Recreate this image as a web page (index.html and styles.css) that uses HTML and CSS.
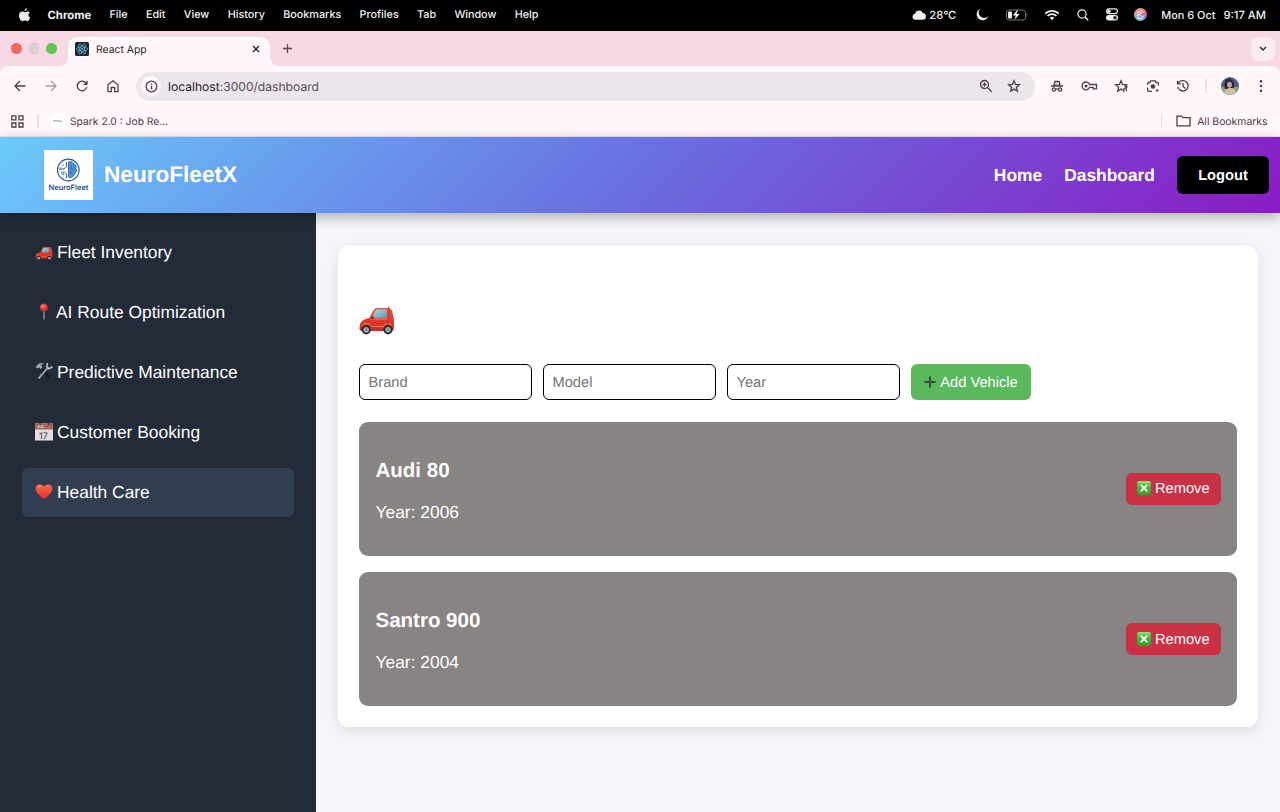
FILE: index.html
```html
<!DOCTYPE html>
<html lang="en">
<head>
<meta charset="utf-8">
<title>React App</title>
<link rel="stylesheet" href="styles.css">
</head>
<body>
<svg class="defs" width="0" height="0">
  <defs>
    <linearGradient id="carRed" x1="0" y1="0" x2="0" y2="1"><stop offset="0" stop-color="#e8503c"/><stop offset=".5" stop-color="#e23a28"/><stop offset="1" stop-color="#c82a1e"/></linearGradient>
    <linearGradient id="glass" x1="0" y1="0" x2="1" y2="1"><stop offset="0" stop-color="#a9dbe6"/><stop offset="1" stop-color="#5ba0b2"/></linearGradient>
    <radialGradient id="pinRed" cx=".4" cy=".35" r=".7"><stop offset="0" stop-color="#f38b7c"/><stop offset=".5" stop-color="#d8392f"/><stop offset="1" stop-color="#a51d1a"/></radialGradient>
    <linearGradient id="heartRed" x1="0" y1="0" x2="0" y2="1"><stop offset="0" stop-color="#fb6b50"/><stop offset="1" stop-color="#df2c1c"/></linearGradient>
    <linearGradient id="crossGreen" x1="0" y1="0" x2="0" y2="1"><stop offset="0" stop-color="#7bdc63"/><stop offset=".4" stop-color="#4fb93d"/><stop offset="1" stop-color="#379a29"/></linearGradient>
    <symbol id="car" viewBox="0 0 36 29">
      <path d="M29 3l1-2.500" stroke="#a5281e" stroke-width="1"/>
      <path d="M.8 20c.3-4 3-6.500 9.500-8.200L14.500 4.500C15.500 2.500 16.500 2 19 2h9.500c2.500 0 3.700.5 4.400 3l2 8v9.500c0 1.600-.8 2.500-2.500 2.500H3C1 25 .5 24 .5 22z" fill="url(#carRed)"/>
      <path d="M12.700 11.700l3.600-6.900c.6-1.200 1.400-1.600 2.600-1.600H27.500l.4 8.500z" fill="url(#glass)"/>
      <path d="M29.300 3.700h1.200l1.500 7-2.300.5z" fill="#c8433a"/>
      <path d="M11.500 13h16.500M3 19.500c4-3 8-2.500 10 1h11c2-3.500 6-4 9-1" fill="none" stroke="#f49b88" stroke-width=".8"/>
      <path d="M28.500 12v8" stroke="#a3261d" stroke-width=".6"/>
      <rect x="12" y="10.500" width="3" height="2.800" rx="1" fill="#a3261d"/>
      <circle cx="7.200" cy="23.800" r="4.600" fill="#282828"/><circle cx="7.200" cy="23.800" r="2.800" fill="#9ca6b1"/><circle cx="7.200" cy="23.800" r=".8" fill="#4d555e"/>
      <circle cx="29" cy="23.800" r="4.600" fill="#282828"/><circle cx="29" cy="23.800" r="2.800" fill="#9ca6b1"/><circle cx="29" cy="23.800" r=".8" fill="#4d555e"/>
    </symbol>
    <symbol id="cross" viewBox="0 0 14 14">
      <rect width="14" height="14" rx="2" fill="url(#crossGreen)"/><path d="M1.500 1h11" stroke="#b4efa5" stroke-width=".8"/><path d="M3.700 3.700l6.600 6.600M10.300 3.700l-6.600 6.600" stroke="#fff" stroke-width="1.700"/>
    </symbol>
  </defs>
</svg>

<div class="menubar">
  <svg class="apple" width="13" height="14" viewBox="0 0 13 14"><path d="M8.900.2c.1 1.500-1 2.800-2.400 2.900C6.300 1.700 7.500.4 8.900.2zM11.800 4.700c-2 1.200-1.700 3.900.4 4.800-.7 2-1.700 3.700-2.900 3.700-.9 0-1.200-.6-2.300-.6s-1.500.6-2.300.6C2.900 13.200 1 10.100 1 7.400c0-2.500 1.600-3.900 3.300-3.900 1 0 1.800.7 2.500.7.700 0 1.600-.8 2.900-.8.800 0 1.600.5 2.100 1.300z" fill="#eee"/></svg>
  <nav class="menus"><b>Chrome</b><span>File</span><span>Edit</span><span>View</span><span>History</span><span>Bookmarks</span><span>Profiles</span><span>Tab</span><span>Window</span><span>Help</span></nav>
  <div class="status">
    <svg class="cloud" width="14" height="12" viewBox="0 0 14 12"><path d="M3.200 10.800A3.100 3.100 0 0 1 2.900 4.700 4.300 4.300 0 0 1 10.900 3.900a3.500 3.500 0 0 1 .2 6.900z" fill="#eee"/></svg>
    <span class="temp">28°C</span>
    <svg class="moon" width="13" height="13" viewBox="0 0 13 13"><path d="M4.200.8A6 6 0 1 0 12.300 8.300 4.800 4.800 0 0 1 4.200.8z" fill="#eee"/></svg>
    <svg class="battery" width="22" height="12" viewBox="0 0 22 12"><rect x=".5" y="1" width="19" height="10" rx="2.500" fill="none" stroke="#777"/><rect x="2" y="2.500" width="4" height="7" rx="1" fill="#eee"/><path d="M11 1.300L6.800 6.600h3L8.500 10.800l5-5.700h-3.100l1.500-3.800z" fill="#fff"/><path d="M20.500 4.200c1.200.6 1.200 3 0 3.600z" fill="#777"/></svg>
    <svg class="wifi" width="16" height="12" viewBox="0 0 16 12" fill="none" stroke="#f2f2f2"><path d="M1.200 4.600a9.800 9.800 0 0 1 13.600 0M3.500 7a6.500 6.500 0 0 1 9 0" stroke-width="1.700"/><path d="M5.700 8.800a3.300 3.300 0 0 1 4.600 0L8 11.300z" fill="#f2f2f2" stroke="none"/></svg>
    <svg class="search" width="12" height="12" viewBox="0 0 12 12" fill="none" stroke="#eee"><circle cx="5" cy="5" r="4.100" stroke-width="1.200"/><path d="M8 8l3.200 3.200" stroke-width="1.500"/></svg>
    <svg class="control" width="12" height="13" viewBox="0 0 12 13"><rect x=".6" y=".9" width="10.800" height="4.700" rx="2.350" fill="none" stroke="#eee" stroke-width="1.100"/><circle cx="3" cy="3.250" r="1.700" fill="#eee"/><rect y="7" width="12" height="5.500" rx="2.750" fill="#eee"/><circle cx="9" cy="9.750" r="1.700" fill="#222"/></svg>
    <span class="siri"><svg width="13" height="13" viewBox="0 0 13 13" fill="none" stroke="#fff"><path d="M3 5l2-1.500 1.500 1.500L8.500 3.500 10 5M3 8c1.500-2 3-2 4-.5S9.300 9 10 7.500M4 10c2 1 4 .5 5.300-.5"/></svg></span>
    <span class="date">Mon 6 Oct</span><span class="clock">9:17 AM</span>
  </div>
</div>

<div class="tabstrip">
  <div class="lights"><i class="red"></i><i class="grey"></i><i class="green"></i></div>
  <div class="tab">
    <svg width="14" height="14" viewBox="0 0 14 14"><rect width="14" height="14" rx="1.500" fill="#20262f"/><g fill="none" stroke="#5eb8d4" stroke-width=".75"><ellipse cx="7" cy="7" rx="5.600" ry="2.200"/><ellipse cx="7" cy="7" rx="5.600" ry="2.200" transform="rotate(60 7 7)"/><ellipse cx="7" cy="7" rx="5.600" ry="2.200" transform="rotate(120 7 7)"/></g><circle cx="7" cy="7" r="1" fill="#5eb8d4"/></svg>
    <span>React App</span>
    <svg class="close" width="8" height="8" viewBox="0 0 8 8"><path d="M1 1l6 6M7 1l-6 6" stroke="#2b2326" stroke-width="1.300"/></svg>
  </div>
  <svg class="plus" width="11" height="11" viewBox="0 0 11 11"><path d="M5.500 1v9M1 5.500h9" stroke="#5a444c" stroke-width="1.300"/></svg>
  <div class="tabsearch"><svg width="8" height="6" viewBox="0 0 8 6"><path d="M1 1l3 3 3-3" fill="none" stroke="#2b2326" stroke-width="1.400"/></svg></div>
</div>

<div class="toolbar">
  <div class="navicons">
    <svg width="14" height="14" viewBox="0 0 14 14"><path d="M12.500 7H2M7 2L2 7l5 5" class="ln"/></svg>
    <svg class="dim" width="14" height="14" viewBox="0 0 14 14"><path d="M1.500 7H12M7 2l5 5-5 5" class="ln"/></svg>
    <svg width="14" height="14" viewBox="0 0 14 14"><path d="M11.700 8.200A4.800 4.800 0 1 1 10.800 4l1 1.200M12 1.700v3.600H8.400" class="ln"/></svg>
    <svg width="14" height="14" viewBox="0 0 14 14"><path d="M2 5.700L7 1.800l5 3.900v7H8.700V8.500H5.300v4.200H2z" class="ln"/></svg>
  </div>
  <div class="omnibox">
    <span class="info"><svg width="13" height="13" viewBox="0 0 13 13"><circle cx="6.500" cy="6.500" r="5.300" class="ln"/><path d="M6.500 5.700v3.600M6.500 3.400v1.300" class="ln"/></svg></span>
    <span class="url"><em>localhost</em>:3000/dashboard</span>
    <svg class="zoomicon" width="14" height="14" viewBox="0 0 14 14"><circle cx="5.500" cy="5.500" r="4" class="ln"/><path d="M8.500 8.500l4.400 4.400M5.500 3.600v3.800M3.600 5.500h3.800" class="ln"/></svg>
    <svg width="14" height="14" viewBox="0 0 14 14"><path d="M7 1.800l1.500 3.600 3.900.3-3 2.600.9 3.800L7 10.100l-3.300 2 .9-3.800-3-2.600 3.900-.3z" class="ln"/></svg>
  </div>
  <div class="exticons">
    <svg width="14" height="14" viewBox="0 0 14 14"><path d="M1 7h12M3.900 6.500l1-4h4.200l1 4M5.400 10.300q1.600-.8 3.200 0" class="ln"/><path d="M4 4.500h6v2.500H4z" fill="#4b4044" opacity=".45"/><circle cx="3.900" cy="10.500" r="1.600" class="ln"/><circle cx="10.100" cy="10.500" r="1.600" class="ln"/></svg>
    <svg width="17" height="14" viewBox="0 0 17 14"><path d="M8.600 5.500h6.900v4.300h-3.300V8.300H8.600A3.900 3.900 0 1 1 8.600 5.500z" class="ln"/><circle cx="5" cy="6.900" r="1.500" fill="#4b4044"/></svg>
    <svg width="15" height="14" viewBox="0 0 15 14"><path d="M9 11.300L7 10.100l-3.300 2 .9-3.800-3-2.600 3.900-.3L7 1.800l1.500 3.600 3.900.3-2 1.700M9.800 12.800V9.800L13.700 7.500M12.300 12.300V6.500" class="ln"/></svg>
    <svg width="14" height="14" viewBox="0 0 14 14"><path d="M1.600 5.800V4.500q0-1 1-1h1.300l.9-1.600h4.400l.9 1.600h1.300q1 0 1 1v2M1.600 8.500v2.800q0 1 1 1H6" class="ln"/><circle cx="7" cy="7.500" r="2.300" fill="#4b4044"/><circle cx="11.200" cy="11.500" r="1.200" fill="#4b4044"/></svg>
    <svg width="14" height="14" viewBox="0 0 14 14"><path d="M2.300 4.300a5.200 5.200 0 1 1-.5 3.500M1.600 1.700v3.200h3.200M7 4v3.300l2.300 2.200" class="ln"/></svg>
  </div>
  <i class="divider"></i>
  <svg class="avatar" width="18" height="18" viewBox="0 0 18 18"><defs><clipPath id="face"><circle cx="9" cy="9" r="9"/></clipPath></defs><g clip-path="url(#face)"><rect width="18" height="18" fill="#50628c"/><path d="M0 10h18v8H0z" fill="#a49580"/><path d="M4 12C2 5 5 1.500 8 1.500s6 3 5 9l-3 2z" fill="#292735"/><path d="M3 18c0-5 2-6 5-7h3c3 1 4 3 4 7z" fill="#cdbfa8"/><ellipse cx="8.500" cy="7.800" rx="2.400" ry="3" fill="#cf9f89"/></g></svg>
  <svg class="dots" width="4" height="14" viewBox="0 0 4 14" fill="#4b4044"><circle cx="2" cy="2.200" r="1.250"/><circle cx="2" cy="7" r="1.250"/><circle cx="2" cy="11.800" r="1.250"/></svg>
</div>

<div class="bookmarks">
  <svg width="13" height="13" viewBox="0 0 13 13"><path d="M.9.900h4v4h-4zM8 .9h4v4H8zM.9 8h4v4h-4zM8 8h4v4H8z" class="ln"/></svg>
  <i class="divider"></i>
  <svg class="favicon" width="14" height="14" viewBox="0 0 14 14"><rect width="14" height="14" rx="1" fill="#fff"/><path d="M2 7l3-.3 6 .6" stroke="#888" stroke-width=".9" fill="none"/></svg>
  <span class="spark">Spark 2.0 : Job Re...</span>
  <i class="divider last"></i>
  <svg class="folder" width="15" height="12" viewBox="0 0 15 12"><path d="M1 1.100h4.600l1.500 1.600H14v8.200H1z" class="ln"/></svg>
  <span class="all">All Bookmarks</span>
</div>

<header class="header">
  <svg class="logo" width="49" height="50" viewBox="0 0 49 50"><rect width="49" height="50" fill="#fff"/><circle cx="24.300" cy="20" r="10.900" fill="none" stroke="#2c5c9c" stroke-width="1.100"/><path d="M24.500 12c3-1 5 .2 5.500 2 2 .8 2.600 2.700 2 4.200 1 2 .5 4-1 5-.5 3-3.500 5-6.500 4z" fill="#4c94e2" stroke="#285a9e" stroke-width=".8"/><path d="M27 15v4h3M27 24v-3M22.500 12v5l-3 2M22.500 28v-4l-3-2M16 19h4M20 14.500l-2 2M18 23.500l2 2" fill="none" stroke="#2c5c9c" stroke-width=".9"/><circle cx="16" cy="18.800" r="1.100" fill="#fff" stroke="#2c5c9c" stroke-width=".7"/><circle cx="18.500" cy="23" r="1.100" fill="#fff" stroke="#2c5c9c" stroke-width=".7"/><text x="4.500" y="39.500" textLength="40" lengthAdjust="spacingAndGlyphs" class="logotext">NeuroFleet</text></svg>
  <span class="brand">NeuroFleetX</span>
  <nav><a>Home</a><a>Dashboard</a><button class="logout">Logout</button></nav>
</header>

<div class="app">
  <aside class="sidebar">
    <div class="item"><svg class="minicar" width="18" height="15"><use href="#car"/></svg>Fleet Inventory</div>
    <div class="item pin"><svg width="18" height="18" viewBox="0 0 18 18"><path d="M9 6v10.500" stroke="#a6a6a6" stroke-width="1.200"/><circle cx="9" cy="4.600" r="4.200" fill="url(#pinRed)"/></svg>AI Route Optimization</div>
    <div class="item tools"><svg width="18" height="18" viewBox="0 0 18 18"><path d="M6 6l8.500 10" stroke="#15181b" stroke-width="2"/><path d="M3.500 16.500L13 5.500" stroke="#9baab5" stroke-width="1.900"/><path d="M12.500 1l-.8 3.700 2.300 2 3.500-2" fill="none" stroke="#b4c0c9" stroke-width="1.600"/><path d="M.5 5L4 1.500 9 1 6 3.500l1.500 2-1.700 1.500L4 5.300 2.500 6.500z" fill="#9eabb5"/></svg>Predictive Maintenance</div>
    <div class="item"><svg width="18" height="18" viewBox="0 0 18 18"><rect y=".5" width="18" height="17" fill="#dedede"/><rect y=".5" width="18" height="6" fill="#a56563"/><path d="M4 .5h2v1H4zM13 .5h2v1h-2z" fill="#222"/><text x="2" y="4.800" class="jul">JUL</text><text x="4" y="15.500" class="daynum">17</text></svg>Customer Booking</div>
    <div class="item active"><svg width="18" height="18" viewBox="0 0 18 18"><path d="M9 16.300C6 14 1 10.300.6 5.800.5 1 6.500 0 9 3.500 11.500 0 17.500 1 17.400 5.800 17 10.300 12 14 9 16.300z" fill="url(#heartRed)"/><path d="M3 4.700c.5-1.500 2-2 3.300-1.500" fill="none" stroke="#ff9c82"/></svg>Health Care</div>
  </aside>
  <main class="main">
    <section class="card">
      <svg class="hero" width="36" height="29"><use href="#car"/></svg>
      <div class="form">
        <input placeholder="Brand"><input placeholder="Model"><input placeholder="Year">
        <button class="add"><svg width="12" height="12" viewBox="0 0 12 12"><path d="M6 .5v11M.5 6h11" stroke="#3f4540" stroke-width="2"/></svg>Add Vehicle</button>
      </div>
      <div class="vehicle"><div><h3>Audi 80</h3><p>Year: 2006</p></div><button class="remove"><svg width="14" height="14"><use href="#cross"/></svg>Remove</button></div>
      <div class="vehicle"><div><h3>Santro 900</h3><p>Year: 2004</p></div><button class="remove"><svg width="14" height="14"><use href="#cross"/></svg>Remove</button></div>
    </section>
  </main>
</div>
</body>
</html>
```
FILE: styles.css
```css
* { box-sizing: border-box; }
body { margin: 0; width: 1280px; height: 812px; overflow: hidden; display: flex; flex-direction: column; font-family: "Liberation Sans", Arial, sans-serif; background: #f6d9e5; text-rendering: geometricPrecision; }
.defs { position: absolute; }
svg { display: block; flex: none; }
button, input { font-family: inherit; text-rendering: inherit; }
.ln { fill: none; stroke: #4b4044; stroke-width: 1.3; }

.menubar, .tabstrip, .toolbar, .bookmarks { display: flex; align-items: center; flex: none; font-family: Inter, sans-serif; white-space: nowrap; }
.menubar { height: 31px; background: #000; color: #f2f2f2; padding: 0 14px 2px 18px; font-size: 11.4px; font-weight: 500; }
.apple { margin-right: 16.500px; }
.menus { display: flex; gap: 18.300px; font-size: 10.800px; align-items: center; line-height: 14px; }
.menus b { font-weight: 700; font-size: 11.300px; }
.status { margin-left: auto; display: flex; align-items: center; line-height: 14px; }
.cloud { margin-right: 3px; }
.temp { margin-right: 20px; font-size: 11.200px; }
.moon { margin-right: 17px; }
.battery { margin-right: 16px; }
.wifi { margin-right: 17px; }
.search { margin-right: 17px; }
.control { margin-right: 16px; }
.siri { width: 13px; height: 13px; border-radius: 50%; background: conic-gradient(#eda35e, #e66593, #718de3, #8bcce7, #e68daf, #eda35e); margin-right: 14px; }
.date { margin-right: 8px; font-size: 10.900px; }
.clock { font-size: 11.200px; }

.tabstrip { height: 35px; background: #f6d9e5; padding: 0 5px 0 11px; }
.lights { display: flex; gap: 7px; width: 57px; }
.lights i { width: 10.500px; height: 10.500px; border-radius: 50%; }
.red { background: #ed6a5e; } .grey { background: #ddd0d7; box-shadow: inset 0 0 0 .5px #cbbdc6; } .green { background: #61c554; }
.tab { position: relative; align-self: flex-end; width: 202px; height: 29px; background: #fff7f8; border-radius: 9px 9px 0 0; display: flex; align-items: center; padding: 0 10px 5px 7px; font-size: 10.400px; color: #2b2326; }
.tab::before, .tab::after { content: ""; position: absolute; bottom: 0; width: 8px; height: 8px; }
.tab::before { left: -8px; background: radial-gradient(circle at 0 0, transparent 7.500px, #fff7f8 8px); }
.tab::after { right: -8px; background: radial-gradient(circle at 100% 0, transparent 7.500px, #fff7f8 8px); }
.tab span { margin-left: 7px; }
.close { margin-left: auto; }
.plus { margin-left: 12px; }
.tabsearch { margin-left: auto; width: 24px; height: 24px; border-radius: 8px; background: #fcebf2; display: grid; place-items: center; }

.toolbar { height: 40px; padding: 0 17px 0 12.500px; background: #fff7f8; border-radius: 8px 8px 0 0; }
.navicons { display: flex; gap: 17.300px; width: 123.500px; }
.dim { opacity: .5; }
.omnibox { width: 899px; height: 29px; border-radius: 15px; background: #ece5ec; display: flex; align-items: center; padding: 0 14px 0 5px; font-size: 12.100px; color: #574d53; }
.info { width: 20px; height: 20px; border-radius: 50%; background: #fff7f8; display: grid; place-items: center; }
.url { margin-left: 7px; }
.url em { font-style: normal; color: #292126; }
.zoomicon { margin: 0 14px 0 auto; }
.exticons { display: flex; align-items: center; gap: 16.500px; margin-left: 15px; }
.divider { width: 1.500px; height: 14px; background: #f4dae3; }
.toolbar .divider { margin-left: 15px; }
.avatar { margin-left: 14px; }
.dots { margin-left: auto; }

.bookmarks { height: 31px; padding: 1px 12.500px 1px 11px; background: #fff7f8; font-size: 10.400px; color: #4b4044; border-bottom: 1px solid #ede3e9; }
.bookmarks .divider { margin-left: 13px; }
.spark { font-size: 10.300px; padding-top: 1px; }
.favicon { margin: 0 5.500px 0 12px; }
.bookmarks .last { margin-left: auto; }
.folder { margin: 0 6px 0 14px; }

.header { position: relative; z-index: 1; height: 76px; flex: none; background: linear-gradient(135deg, #6dcafb, #68a4ef 20%, #6a6ee0 50%, #7a42d0 77%, #8a1bc4); box-shadow: 0 4px 13px rgba(0, 0, 0, .3); display: flex; align-items: center; padding: 0 11px 0 44px; color: #fff; }
.logotext { font: 600 7.500px Inter, sans-serif; fill: #28559a; }
.brand { margin-left: 11px; font-size: 22.600px; font-weight: 700; }
.header nav { margin-left: auto; display: flex; align-items: center; gap: 22px; font-size: 17.400px; font-weight: 700; }
.logout { width: 92px; height: 38px; border: 0; border-radius: 6px; background: #000; color: #fff; font-size: 14.700px; font-weight: 700; padding: 1px 0 0; }

.app { flex: 1; display: flex; min-height: 0; }
.sidebar { width: 316px; background: #222b37; padding: 15px 22px; display: flex; flex-direction: column; gap: 11px; }
.item { height: 49px; border-radius: 6px; color: #fff; font-size: 17.400px; display: flex; align-items: center; padding-left: 13px; gap: 4px; }
.item svg { margin-bottom: 1px; }
.item .minicar { margin: 1px 0 0; }
.pin { gap: 3px; }
.tools svg { margin-bottom: 3px; }
.active { background: #313e50; }
.jul { font: 4px Inter, sans-serif; fill: #fff; }
.daynum { font: 9px Inter, sans-serif; fill: #444; }
.main { flex: 1; background: #f4f6fb; padding: 33px 22px; }
.card { width: 920.500px; height: 481px; background: #fff; border-radius: 11px; padding: 60px 21.500px 0; box-shadow: 0 4px 13px rgba(0, 0, 0, .1); }
.form { display: flex; gap: 11px; margin: 29px 0 21.500px; }
.form input { width: 173px; height: 36px; border: 1px solid #000; border-radius: 6px; padding: 1px 8.500px 0; font-size: 14.670px; background: #fff; }
.form input::placeholder { color: #757575; }
.add, .remove { border: 0; border-radius: 6px; color: #fff; font-size: 14.670px; display: flex; align-items: center; padding: 1px 0 0; white-space: nowrap; }
.add { width: 120px; height: 36px; background: #5ab95c; justify-content: center; gap: 4px; }
.add svg, .remove svg { margin-bottom: 2px; }
.vehicle { height: 134px; background: #888483; border-radius: 9px; display: flex; justify-content: space-between; align-items: center; padding: 0 16px 0 16.500px; color: #fff; margin-bottom: 16.500px; }
.vehicle h3 { margin: 13px 0 0; font-size: 20.500px; line-height: 24px; }
.vehicle p { margin: 18px 0 9px; font-size: 17.400px; line-height: 22px; }
.remove { width: 95px; height: 32px; background: #ca3144; padding-left: 11px; gap: 4.500px; }
```
